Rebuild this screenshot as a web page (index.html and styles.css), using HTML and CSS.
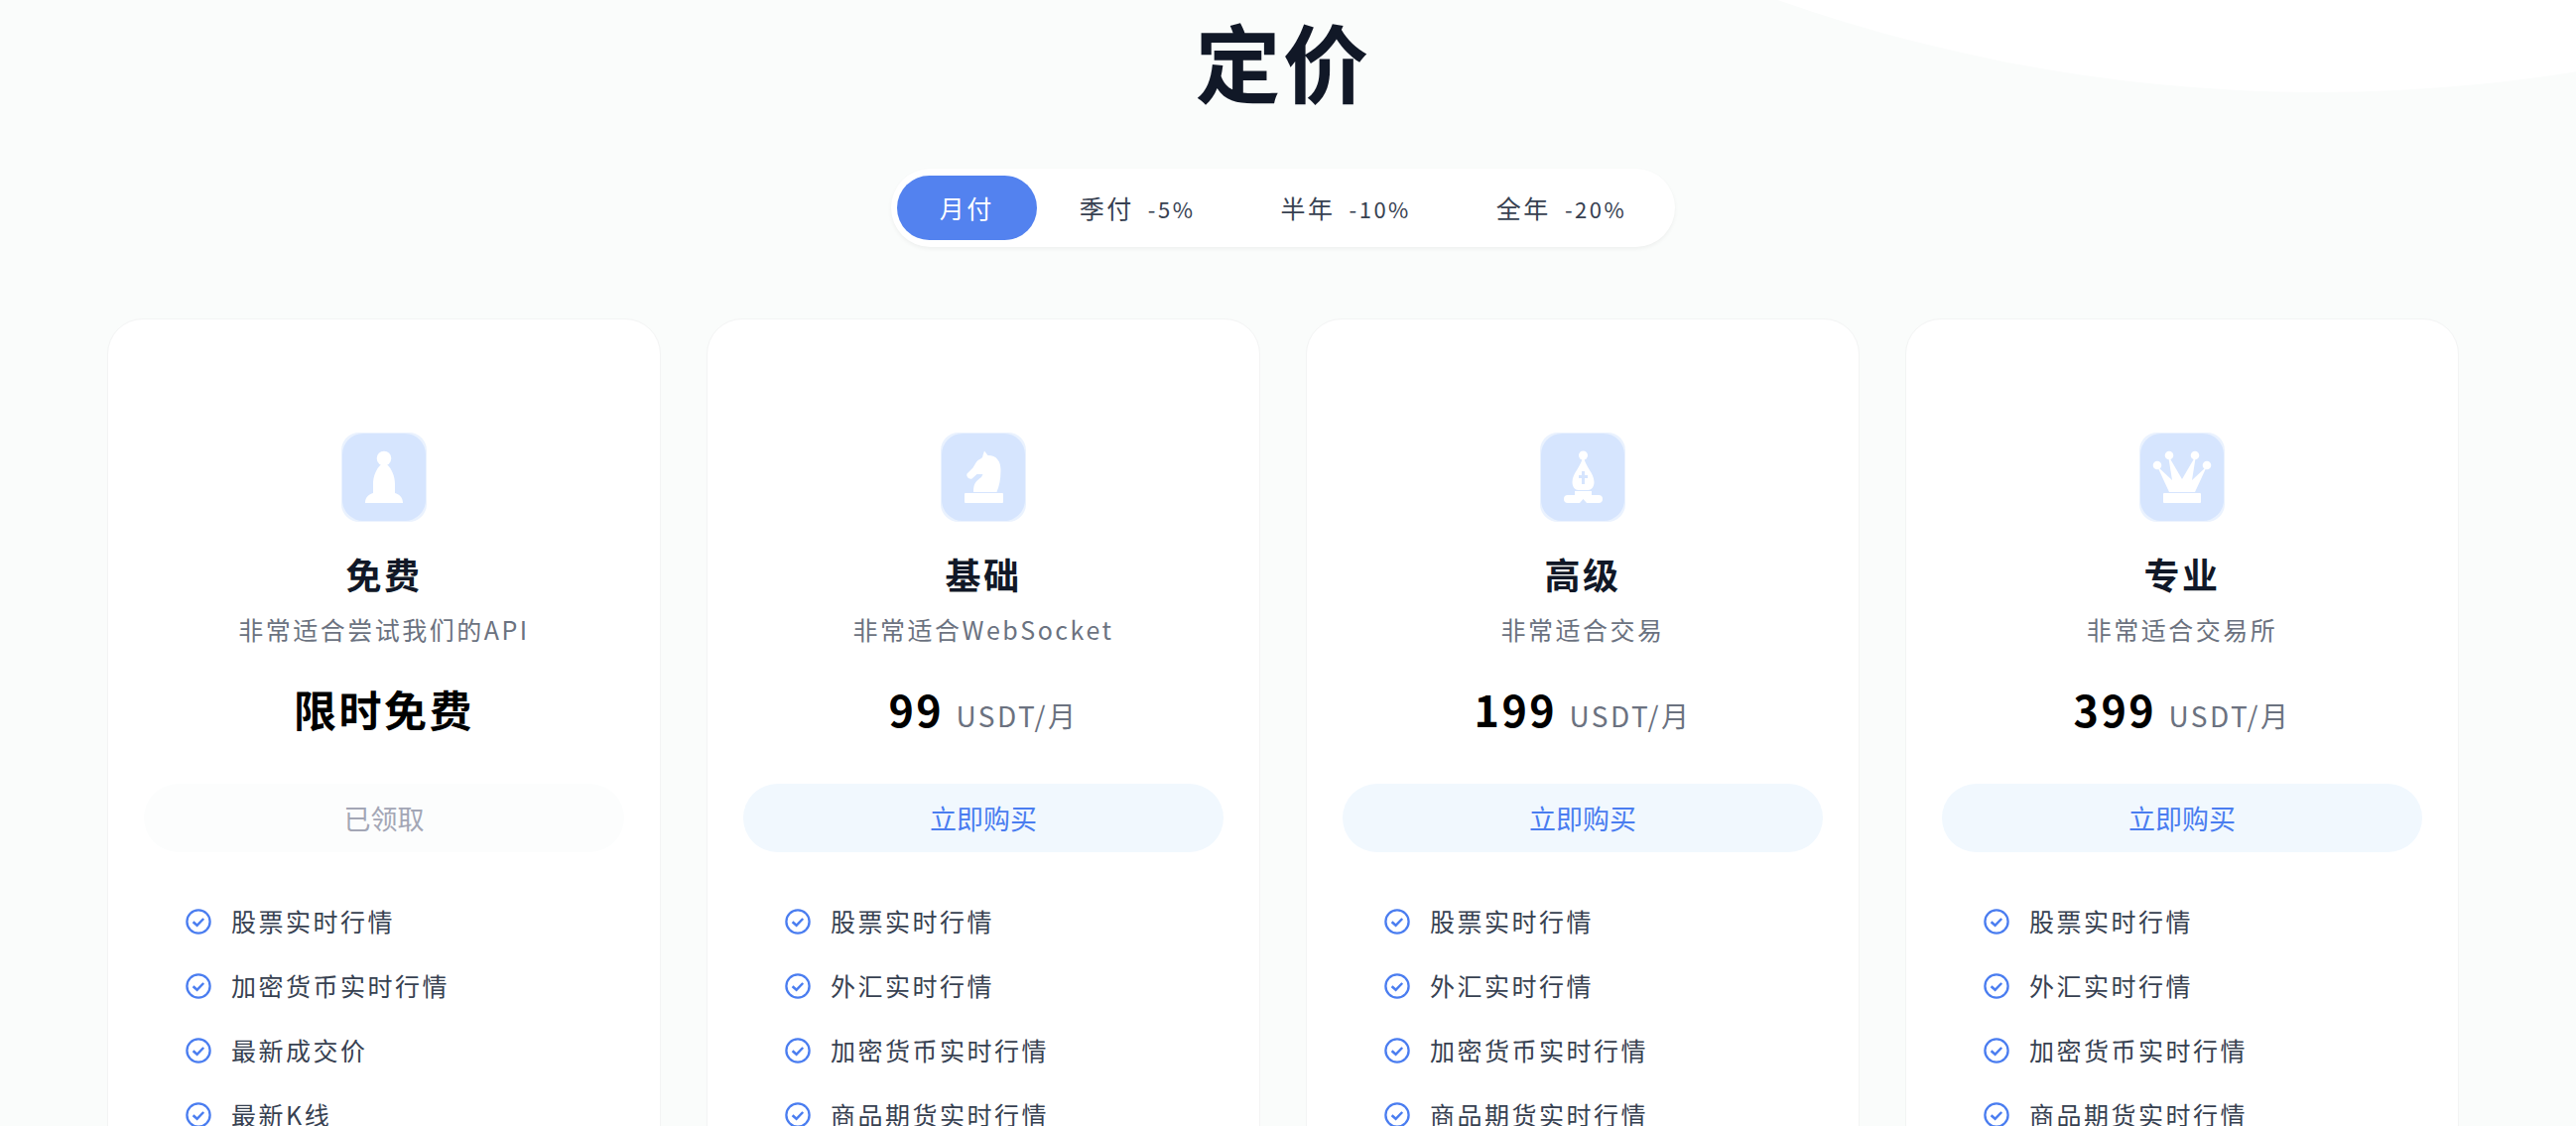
FILE: index.html
```
<!DOCTYPE html>
<html lang="zh-CN">
<head>
    <meta charset="UTF-8">
    <meta name="viewport" content="width=device-width, initial-scale=1.0">
    <title>定价</title>
    <link rel="stylesheet" href="styles.css">
</head>
<body>
    <!-- shared check mark for the feature lists -->
    <svg class="sprite" aria-hidden="true">
        <symbol id="check" viewBox="0 0 26 26">
            <circle cx="13" cy="13" r="11.6" fill="none" stroke="currentColor" stroke-width="2.3"/>
            <path d="M7.600 13.200l4 3.600 6.600-6.800" fill="none" stroke="currentColor" stroke-width="2.5"/>
        </symbol>
    </svg>

    <section class="pricing">
        <h1>定价</h1>

        <div class="period">
            <button class="period-btn active" type="button">月付</button>
            <button class="period-btn" type="button">季付 <small>-5%</small></button>
            <button class="period-btn" type="button">半年 <small>-10%</small></button>
            <button class="period-btn" type="button">全年 <small>-20%</small></button>
        </div>

        <div class="plans">
            <div class="plan">
                <svg class="plan-icon" viewBox="0 0 86 90">
                    <rect class="icon-edge" width="86" height="90" rx="18"/>
                    <rect class="icon-bg" x="1" y="1" width="84" height="88" rx="21"/>
                    <circle cx="43" cy="26" r="7.3"/>
                    <path d="M40 32h6c5 5 8 12 8 20v9c4 1 8 4 8 10H24c0-6 4-9 8-10v-9c0-8 3-15 8-20z"/>
                </svg>
                <h2>免费</h2>
                <p class="plan-desc">非常适合尝试我们的API</p>
                <p class="price">限时免费</p>
                <button class="buy" type="button" disabled>已领取</button>
                <ul class="features">
                    <li><svg><use href="#check"/></svg>股票实时行情</li>
                    <li><svg><use href="#check"/></svg>加密货币实时行情</li>
                    <li><svg><use href="#check"/></svg>最新成交价</li>
                    <li><svg><use href="#check"/></svg>最新K线</li>
                </ul>
            </div>

            <div class="plan">
                <svg class="plan-icon" viewBox="0 0 86 90">
                    <rect class="icon-edge" width="86" height="90" rx="18"/>
                    <rect class="icon-bg" x="1" y="1" width="84" height="88" rx="21"/>
                    <path d="M44 18.500l3.500 4.500c9 0 13 6 13 15 0 9-1.500 16-4 22H33c0-8 2-11 8-15l1.500-3h-6l-5 4.500c-3 1-6-2-5-5l6-6c2-3 3-6 5-7.500 2.500-1.500 5-2 5-5z"/>
                    <rect x="24" y="61" width="39" height="10" rx="1"/>
                </svg>
                <h2>基础</h2>
                <p class="plan-desc">非常适合WebSocket</p>
                <p class="price">99 <span>USDT/月</span></p>
                <button class="buy" type="button">立即购买</button>
                <ul class="features">
                    <li><svg><use href="#check"/></svg>股票实时行情</li>
                    <li><svg><use href="#check"/></svg>外汇实时行情</li>
                    <li><svg><use href="#check"/></svg>加密货币实时行情</li>
                    <li><svg><use href="#check"/></svg>商品期货实时行情</li>
                </ul>
            </div>

            <div class="plan">
                <svg class="plan-icon" viewBox="0 0 86 90">
                    <rect class="icon-edge" width="86" height="90" rx="18"/>
                    <rect class="icon-bg" x="1" y="1" width="84" height="88" rx="21"/>
                    <circle cx="43.500" cy="23" r="4.500"/>
                    <path d="M42.500 26h2c1 8 10 15 10 24 0 5-3 8-6 8h-10c-3 0-6-3-6-8 0-9 9-16 10-24z"/>
                    <path class="icon-line" d="M43.500 39v13M39 44.500h9"/>
                    <path d="M35 59h17v4h7a4 4 0 0 1 0 8H47l-3.500-4-3.500 4H28a4 4 0 0 1 0-8h7z"/>
                </svg>
                <h2>高级</h2>
                <p class="plan-desc">非常适合交易</p>
                <p class="price">199 <span>USDT/月</span></p>
                <button class="buy" type="button">立即购买</button>
                <ul class="features">
                    <li><svg><use href="#check"/></svg>股票实时行情</li>
                    <li><svg><use href="#check"/></svg>外汇实时行情</li>
                    <li><svg><use href="#check"/></svg>加密货币实时行情</li>
                    <li><svg><use href="#check"/></svg>商品期货实时行情</li>
                </ul>
            </div>

            <div class="plan">
                <svg class="plan-icon" viewBox="0 0 86 90">
                    <rect class="icon-edge" width="86" height="90" rx="18"/>
                    <rect class="icon-bg" x="1" y="1" width="84" height="88" rx="21"/>
                    <circle cx="18" cy="33" r="4.300"/>
                    <circle cx="30" cy="23" r="4.300"/>
                    <circle cx="56" cy="23" r="4.300"/>
                    <circle cx="68" cy="33" r="4.300"/>
                    <path d="M18 34l15 14-4-25 14 24 14-24-4 25 15-14-12 26H30z"/>
                    <rect x="24" y="61" width="38" height="10" rx="1"/>
                </svg>
                <h2>专业</h2>
                <p class="plan-desc">非常适合交易所</p>
                <p class="price">399 <span>USDT/月</span></p>
                <button class="buy" type="button">立即购买</button>
                <ul class="features">
                    <li><svg><use href="#check"/></svg>股票实时行情</li>
                    <li><svg><use href="#check"/></svg>外汇实时行情</li>
                    <li><svg><use href="#check"/></svg>加密货币实时行情</li>
                    <li><svg><use href="#check"/></svg>商品期货实时行情</li>
                </ul>
            </div>
        </div>
    </section>
</body>
</html>
```
FILE: styles.css
```
* {
    box-sizing: border-box;
}
body {
    margin: 0;
    background-color: #fafcfb;
    color: #374151;
    font-family: 'Noto Sans CJK SC', sans-serif;
    font-size: 25px;
    line-height: 39px;
    letter-spacing: 0.1em;
}
h1, h2, p, ul {
    margin: 0;
    padding: 0;
}
button {
    border: none;
    font-family: inherit;
    cursor: pointer;
}
.sprite {
    display: none;
}
.pricing {
    position: relative;
    overflow: hidden;
    padding: 1px 118px 0 108px;
}
/* big white circle behind the title */
.pricing::before {
    content: '';
    position: absolute;
    left: 90%;
    top: -3187px;
    width: 3280px;
    height: 3280px;
    margin-left: -1640px;
    border-radius: 50%;
    background-color: #fff;
}
h1 {
    position: relative;
    color: #111827;
    font-size: 86px;
    line-height: 120px;
    text-align: center;
}
.period {
    position: relative;
    display: flex;
    width: fit-content;
    margin: 49px auto 72px;
    padding: 7px 6px;
    border-radius: 40px;
    background-color: #fff;
    box-shadow: 0 2px 4px rgba(0, 0, 0, 0.05);
}
.period-btn {
    padding: 13px 43px;
    border-radius: 33px;
    background: none;
    color: #374151;
    font-size: 25px;
    line-height: 39px;
    letter-spacing: inherit;
}
.period-btn.active {
    background-color: #5382ef;
    color: #fff;
}
.period-btn small {
    margin-left: 6px;
    font-size: 22px;
    line-height: 1;
}
.plans {
    position: relative;
    display: grid;
    grid-template-columns: repeat(4, 1fr);
    gap: 46px;
}
.plan {
    padding: 114px 36px 36px;
    border: 1px solid #f3f4f4;
    border-radius: 36px;
    background-color: #fff;
    text-align: center;
}
.plan-icon {
    display: block;
    width: 86px;
    height: 90px;
    margin: 0 auto 25px;
    fill: #fff;
}
.icon-edge {
    fill: #eaf2fe;
}
.icon-bg {
    fill: #d6e5fe;
}
.icon-line {
    stroke: #d6e5fe;
    stroke-width: 3;
}
h2 {
    color: #111827;
    font-size: 36px;
    line-height: 54px;
}
.plan-desc {
    margin-top: 10px;
    color: #6b7280;
}
.price {
    margin: 28px 0 43px;
    color: #000;
    font-size: 43px;
    font-weight: bold;
    line-height: 65px;
}
.price span {
    color: #6b7280;
    font-size: 28px;
    font-weight: normal;
    line-height: 1;
}
.buy {
    width: 100%;
    padding: 15px;
    border-radius: 35px;
    background-color: #f1f8fe;
    color: #4a7df0;
    font-size: 27px;
    line-height: 39px;
}
.buy:disabled {
    background-color: #fcfdfd;
    color: #a3a6b5;
    cursor: default;
}
.features {
    display: grid;
    gap: 26px;
    margin-top: 50px;
    padding: 0 42px;
    list-style: none;
    text-align: left;
}
.features li {
    display: flex;
    align-items: center;
    gap: 20px;
}
.features svg {
    flex: none;
    width: 26px;
    height: 26px;
    color: #4a7df0;
}
```
